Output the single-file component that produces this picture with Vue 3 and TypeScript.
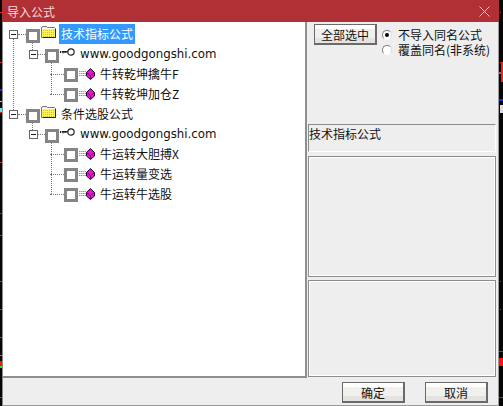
<script setup lang="ts">
interface Row { kind: 'root' | 'site' | 'leaf'; label: string; selected?: boolean }
interface Mark { x: number; y: number; w: number; h: number; c: string }
const rows: Row[] = [
  { kind: 'root', label: '技术指标公式', selected: true },
  { kind: 'site', label: 'www.goodgongshi.com' },
  { kind: 'leaf', label: '牛转乾坤擒牛F' },
  { kind: 'leaf', label: '牛转乾坤加仓Z' },
  { kind: 'root', label: '条件选股公式' },
  { kind: 'site', label: 'www.goodgongshi.com' },
  { kind: 'leaf', label: '牛运转大胆搏X' },
  { kind: 'leaf', label: '牛运转量变选' },
  { kind: 'leaf', label: '牛运转牛选股' },
]
const marks: Mark[] = [
  { x: 0, y: 12, w: 2, h: 1, c: '#d22' }, { x: 0, y: 62, w: 2, h: 1, c: '#d22' },
  { x: 0, y: 89, w: 2, h: 2, c: '#22e' }, { x: 0, y: 101, w: 2, h: 1, c: '#cc9' },
  { x: 0, y: 108, w: 2, h: 4, c: '#5ee' }, { x: 0, y: 112, w: 2, h: 1, c: '#e22' },
  { x: 0, y: 162, w: 2, h: 1, c: '#d22' }, { x: 0, y: 213, w: 2, h: 1, c: '#922' },
  { x: 0, y: 235, w: 2, h: 1, c: '#c22' }, { x: 0, y: 281, w: 2, h: 1, c: '#d22' },
  { x: 0, y: 309, w: 2, h: 1, c: '#d22' }, { x: 0, y: 337, w: 2, h: 1, c: '#d22' },
  { x: 0, y: 355, w: 2, h: 1, c: '#2c2' }, { x: 0, y: 361, w: 2, h: 5, c: '#f11' },
  { x: 0, y: 366, w: 2, h: 2, c: '#2e2' }, { x: 0, y: 397, w: 2, h: 1, c: '#b22' },
  { x: 500, y: 12, w: 1, h: 1, c: '#d22' }, { x: 500, y: 62, w: 1, h: 1, c: '#d22' },
  { x: 499, y: 72, w: 4, h: 2, c: '#f33' }, { x: 501, y: 62, w: 2, h: 20, c: '#e22' },
  { x: 499, y: 99, w: 4, h: 2, c: '#22e' }, { x: 500, y: 105, w: 3, h: 8, c: '#ddd' },
  { x: 500, y: 281, w: 1, h: 1, c: '#d22' }, { x: 500, y: 309, w: 1, h: 1, c: '#d22' },
  { x: 499, y: 351, w: 4, h: 1, c: '#c22' }, { x: 499, y: 358, w: 4, h: 8, c: '#f11' },
  { x: 499, y: 397, w: 4, h: 1, c: '#b22' },
]
function markStyle(m: Mark) {
  return { left: m.x + 'px', top: m.y + 'px', width: m.w + 'px', height: m.h + 'px', background: m.c }
}
</script>

<template>
  <div class="desk">
    <div class="win">
      <div class="title">
        <span>导入公式</span>
        <svg class="close" width="11" height="11" viewBox="0 0 11 11"><path d="M.5.5l10 10M10.500.5l-10 10" stroke="#e8c8c8" fill="none"/></svg>
      </div>
      <div class="main">
        <div class="tree">
          <span class="trunk"></span>
          <div v-for="(r, i) in rows" :key="i" class="row" :class="r.kind">
            <span v-if="r.kind !== 'leaf'" class="exp"><i></i></span>
            <span class="dash" :class="{ leafdash: r.kind === 'leaf' }"></span>
            <span class="chk"></span>
            <svg v-if="r.kind === 'root'" class="ico folder" width="15" height="12" viewBox="0 0 15 12">
              <defs>
                <pattern :id="'dith' + i" width="2" height="2" patternUnits="userSpaceOnUse">
                  <rect width="2" height="2" fill="#fff35a"/>
                  <rect width="1" height="1" fill="#c9c23a"/>
                </pattern>
              </defs>
              <path d="M.5 11.500V1.500l1-1h4l1 1h7l1 1v9z" :fill="'url(#dith' + i + ')'" stroke="#777"/>
              <path d="M1 2.500h13" stroke="#fff"/>
              <path d="M14.500 3v8.500H2" stroke="#222" fill="none"/>
            </svg>
            <svg v-if="r.kind === 'site'" class="ico key" width="15" height="8" viewBox="0 0 15 8">
              <circle cx="11" cy="4" r="3.200" fill="#fff" stroke="#222" stroke-width="1.200"/>
              <path d="M8 4H1.500M.5 3v2M2 3.500h5" stroke="#222" fill="none"/>
              <path d="M3 4v1.500M5 4v1" stroke="#222" fill="none"/>
            </svg>
            <svg v-if="r.kind === 'leaf'" class="ico gem" width="17" height="12" viewBox="0 0 17 12">
              <path d="M0 3.500h7M0 5.500h7M0 7.500h7" stroke="#9a9a9a" stroke-dasharray="1.500 .5"/>
              <path d="M11.500.5l4 4v3.500l-4 3.500-4-3.500V4.500z" fill="#ea10dc" stroke="#111"/>
              <path d="M7.500 4.500l4 3 4-3M11.500 7.500v4" stroke="#7a0a70" fill="none"/>
            </svg>
            <span class="label" :class="{ sel: r.selected, url: r.kind === 'site' }">{{ r.label }}</span>
            <span v-if="r.kind === 'site'" class="vline" :class="{ long: i === 5 }"></span>
            <span v-if="r.kind === 'root'" class="vshort"></span>
          </div>
        </div>
        <div class="side">
          <div class="opts">
            <button class="btn all">全部选中</button>
            <div class="radios">
              <label class="radio"><span class="dot on"></span>不导入同名公式</label>
              <label class="radio"><span class="dot"></span>覆盖同名(非系统)</label>
            </div>
          </div>
          <div class="grp first">技术指标公式</div>
          <div class="grp second"></div>
          <div class="grp third"></div>
        </div>
      </div>
      <div class="foot">
        <button class="btn ok">确定</button>
        <button class="btn">取消</button>
      </div>
    </div>
    <span v-for="(m, i) in marks" :key="i" class="mark" :style="markStyle(m)"></span>
  </div>
</template>

<style>
html, body { margin: 0; background: #000; }
</style>

<style scoped>
.desk { position: relative; width: 503px; height: 406px; background: #060606; overflow: hidden; font-family: "Noto Sans CJK SC", "Liberation Sans", sans-serif; font-size: 12px; color: #111; }
.win { position: absolute; left: 2px; top: 0; width: 497px; height: 406px; display: flex; flex-direction: column; background: #eeeeee; }
.title { height: 22px; flex: none; background: #b03035; color: #f0dcdc; display: flex; align-items: center; justify-content: space-between; padding: 0 9px 0 5px; box-sizing: border-box; }
.close { display: block; }
.main { flex: none; height: 356px; display: flex; border-left: 1px solid #8a8a8a; border-right: 1px solid #9a9a9a; }
.tree { position: relative; width: 304px; flex: none; height: 356px; background: #fff; border-right: 2px solid #8f8f8f; border-bottom: 2px solid #8f8f8f; box-sizing: border-box; padding-top: 2px; }
.row { position: relative; height: 20px; display: flex; align-items: center; white-space: nowrap; }
.root { padding-left: 6px; }
.site { padding-left: 26px; }
.site .dash { width: 7px; }
.leaf { padding-left: 47px; }
.exp { width: 9px; height: 9px; border: 1px solid #666; box-sizing: border-box; display: flex; align-items: center; justify-content: center; flex: none; background: #fff; position: relative; z-index: 1; }
.exp i { width: 5px; height: 1px; background: #222; }
.dash { width: 8px; height: 0; border-top: 1px dotted #777; flex: none; }
.leafdash { width: 14px; }
.chk { width: 14px; height: 14px; border: 3px solid #858585; box-sizing: border-box; background: #fff; flex: none; position: relative; top: 2px; z-index: 1; }
.leaf .chk { top: 1px; }
.ico { flex: none; display: block; }
.folder { margin: -5px 0 0 1px; }
.key { margin: -4px 0 0 1px; }
.gem { margin-left: 1px; }
.label { flex: none; line-height: 20px; margin-left: 4px; }
.root .label { margin-left: 3px; padding: 0 2px; }
.sel { background: #3399ff; color: #fff; }
.url { font-family: "DejaVu Sans", sans-serif; font-size: 11.800px; margin-left: 5px; }
.vline { position: absolute; left: 48px; top: 17px; height: 33px; border-left: 1px dotted #777; }
.vline.long { height: 53px; }
.vshort { position: absolute; left: 29px; top: 18px; height: 10px; border-left: 1px dotted #777; }
.trunk { position: absolute; left: 10px; top: 16px; height: 80px; border-left: 1px dotted #777; }
.side { flex: 1; min-width: 0; box-sizing: border-box; padding: 2px 0 0 1px; display: flex; flex-direction: column; }
.opts { height: 100px; display: flex; gap: 5px; padding-left: 6px; flex: none; }
.btn { width: 63px; height: 21px; padding: 0; border: 2px solid #6a6a6a; border-top-width: 1px; border-left-width: 1px; background: linear-gradient(#fff 0 20%, #f2f0ec 20% 70%, #e5e3df 70%); font: inherit; color: #111; box-sizing: border-box; flex: none; }
.radios { display: flex; flex-direction: column; padding-top: 3px; }
.radio { display: flex; align-items: center; height: 15px; line-height: 15px; gap: 6px; white-space: nowrap; }
.dot { width: 10px; height: 10px; border-radius: 50%; background: #fff; border: 1px solid; border-color: #808080 #ddd #fff #808080; box-sizing: border-box; display: flex; align-items: center; justify-content: center; }
.dot.on::after { content: ""; width: 4px; height: 4px; border-radius: 50%; background: #000; }
.grp { border: 1px solid #8c8c8c; box-shadow: inset 0 0 0 1px #fff; box-sizing: border-box; flex: none; margin-bottom: 3px; width: 188px; }
.first { height: 28px; box-shadow: none; border-right-color: #fff; border-bottom-color: #fff; padding: 1px 0 0; line-height: 16px; margin-bottom: 4px; }
.second { height: 121px; }
.third { height: 97px; margin-bottom: 0; }
.foot { flex: 1; display: flex; justify-content: flex-end; gap: 20px; padding: 4px 10px 0 0; box-sizing: border-box; border-left: 1px solid #8a8a8a; border-right: 1px solid #9a9a9a; border-bottom: 1px solid #999; }
.mark { position: absolute; }
</style>
